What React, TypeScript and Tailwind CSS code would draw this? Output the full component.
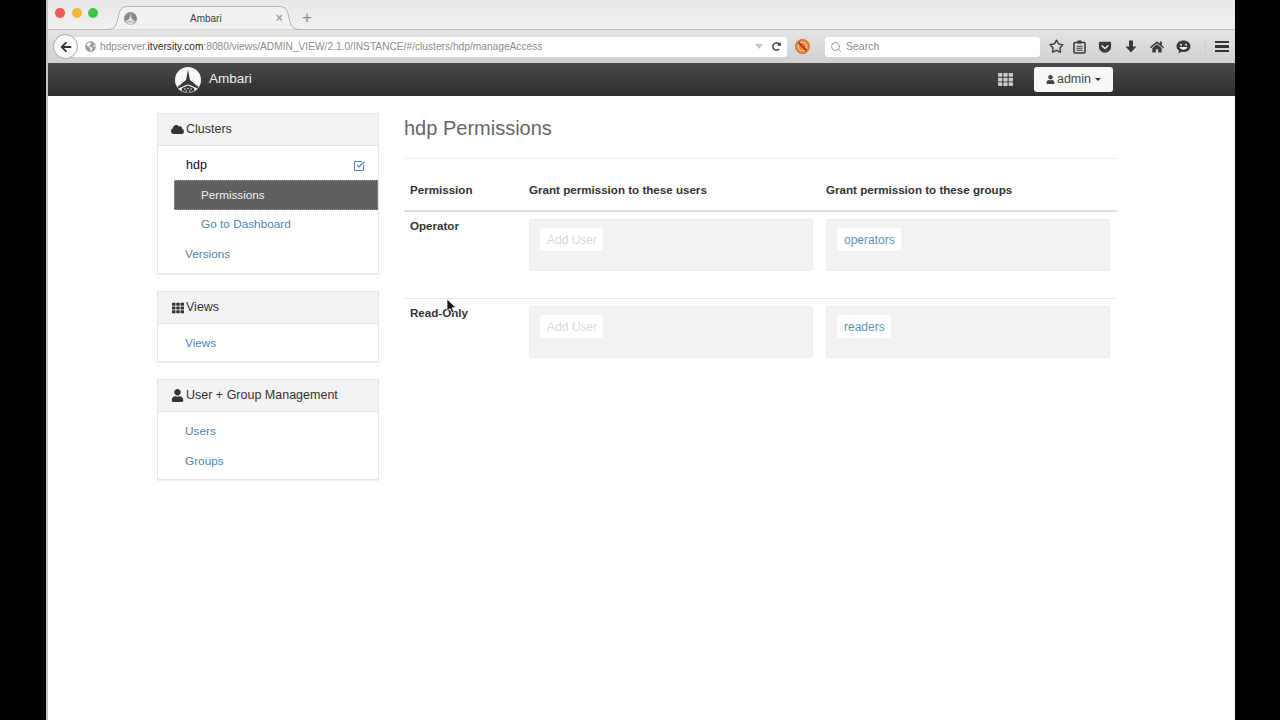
import React from "react";
import { FaCloud, FaTh, FaUser, FaArrowLeft, FaHome, FaGetPocket, FaGlobeAmericas, FaRedoAlt } from "react-icons/fa";
import { Star, SquareCheckBig, Search } from "lucide-react";

const FONT = "font-['Liberation_Sans',Arial,sans-serif]";

function Logo({ size, body, fg }: { size: number; body: string; fg: string }) {
  return (
    <svg width={size} height={size} viewBox="0 0 26 26" className="shrink-0">
      <circle cx="13" cy="13" r="13" fill={body} />
      <path d="M13 2.500 L14.200 9 L15 13 L23.500 20 L22.500 21.500 L16 18.500 L13 17.500 L10 18.500 L3.500 21.500 L2.500 20 L11 13 L11.800 9 Z" fill={fg} />
      <path d="M7 21 L13 18.500 L19 21 L19.500 24 L13 26 L6.500 24 Z" fill={fg} />
      <path d="M9 22 h1.600 M12.200 21.400 h1.600 M15.400 22 h1.600 M10.600 24 h1.400 M14 24 h1.400" stroke={body} strokeWidth="1" />
    </svg>
  );
}

function PanelBox({ icon, title, children }: { icon: React.ReactNode; title: string; children: React.ReactNode }) {
  return (
    <div className="w-[222px] border border-[#e6e6e6] bg-white shadow-[0_1px_1px_rgba(0,0,0,0.05)]">
      <div className="flex h-[32px] items-center gap-[2px] border-b border-[#e2e2e2] bg-[#f3f3f3] pl-[13px] text-[12.500px] text-[#333]">
        <span className="flex w-[13px] justify-center">{icon}</span>
        <span>{title}</span>
      </div>
      <div className="pb-[2px] pt-[5px]">{children}</div>
    </div>
  );
}

function NavRow({ label, indent }: { label: string; indent: string }) {
  return (
    <div className={`flex h-[30px] items-center text-[11.800px] text-[#4d86b5] ${indent}`}>
      <span>{label}</span>
    </div>
  );
}

function Chip({ label, muted }: { label: string; muted?: boolean }) {
  return (
    <span className={`flex h-[23px] items-center rounded-[2px] bg-white pl-[7px] pr-[6px] text-[12px] ${muted ? "text-[#d9d9d9]" : "text-[#5d95be]"}`}>
      {label}
    </span>
  );
}

function GrantBox({ label, muted }: { label: string; muted?: boolean }) {
  return (
    <div className="flex h-[52px] w-[284px] shrink-0 items-start rounded-[3px] border border-[#ececec] bg-[#f2f2f2] pl-[10px] pt-[8px]">
      <Chip label={label} muted={muted} />
    </div>
  );
}

function PermRow({ name, user, group, divider }: { name: string; user: string; group: string; divider?: boolean }) {
  return (
    <div className={`flex pl-[6px] pt-[7px] ${divider ? "h-[87px] border-b border-[#e8e8e8]" : ""}`}>
      <div className="w-[119px] shrink-0 text-[11.600px] font-bold leading-[14px] text-[#333]">{name}</div>
      <GrantBox label={user} muted />
      <div className="w-[13px] shrink-0" />
      <GrantBox label={group} />
    </div>
  );
}

function ReadingList() {
  return (
    <svg width="13" height="14" viewBox="0 0 13 14">
      <rect x="1" y="2.500" width="11" height="10.500" rx="1" fill="none" stroke="#3a3a3a" strokeWidth="1.600" />
      <rect x="4.500" y="0.500" width="4" height="3" fill="#3a3a3a" />
      <path d="M3.500 6.200h6M3.500 8.200h6M3.500 10.200h6" stroke="#3a3a3a" strokeWidth="1.100" />
    </svg>
  );
}

function Chat() {
  return (
    <svg width="15" height="14" viewBox="0 0 15 14">
      <path d="M7.500 0.500C11.500 0.500 14.500 2.900 14.500 6.200S11.500 12 7.500 12C6.800 12 6.100 11.900 5.500 11.800L2.500 13.500L3 10.600C1.400 9.600 .5 8 .5 6.200C.5 2.900 3.500 .5 7.500 .5Z" fill="#3a3a3a" />
      <circle cx="5" cy="4.800" r="1" fill="#eee" />
      <circle cx="10" cy="4.800" r="1" fill="#eee" />
      <path d="M3.500 7h8c-.5 1.800-2.100 2.800-4 2.800S4 8.800 3.500 7Z" fill="#eee" />
    </svg>
  );
}

function DownArrow() {
  return (
    <svg width="12" height="13" viewBox="0 0 12 13">
      <path d="M4 0.500H8V6.500H11.500L6 12.500L.5 6.500H4Z" fill="#3a3a3a" />
    </svg>
  );
}

function NoScript() {
  return (
    <svg width="15" height="15" viewBox="0 0 15 15">
      <circle cx="7.500" cy="7.500" r="7" fill="#e8873a" stroke="#b9602a" strokeWidth="0.800" />
      <circle cx="7.500" cy="7.500" r="4.300" fill="none" stroke="#f9d9a8" strokeWidth="1" />
      <path d="M3.500 3.500L11.500 11.500" stroke="#a83a1e" strokeWidth="1.800" />
    </svg>
  );
}

export default function App() {
  return (
    <div className={`relative flex h-[720px] w-[1280px] overflow-hidden bg-black ${FONT}`}>
      <div className="w-[46px] shrink-0 bg-black" />
      <div className="flex w-[1189px] shrink-0 flex-col border-l-2 border-[#c4c4c4] bg-white">
        {/* tab strip */}
        <div className="flex h-[30px] items-start border-b border-[#b9b9b9] bg-gradient-to-b from-[#e7e7e7] to-[#f0f0f0]">
          <div className="ml-[7px] mt-[8px] flex gap-[6.500px]">
            <span className="h-[10px] w-[10px] rounded-full bg-[#ee5a58]" />
            <span className="h-[10px] w-[10px] rounded-full bg-[#f4b63a]" />
            <span className="h-[10px] w-[10px] rounded-full bg-[#3fc24c]" />
          </div>
          <div className="relative ml-[9px] mt-[6px] flex h-[24px] w-[194px] shrink-0 items-center">
            <svg width="194" height="24" viewBox="0 0 194 24" className="absolute left-0 top-0">
              <path d="M0 23.500C6 23.500 9 22 11 12C12.500 3 15 .5 21 .5H172C178 .5 180.500 3 182 12C184 22 187 23.500 193 23.500" fill="#f1f1f1" stroke="#b0b0b0" />
            </svg>
            <span className="relative ml-[17px]">
              <Logo size={13} body="#8a8a8a" fg="#e8e8e8" />
            </span>
            <span className="relative ml-[53px] text-[10px] text-[#3f3f3f]">Ambari</span>
            <span className="relative ml-[54px] text-[12px] font-bold leading-none text-[#a0a0a0]">×</span>
          </div>
          <span className="ml-[1px] mt-[9px] text-[17px] font-light leading-none text-[#8a8a8a]">+</span>
        </div>
        {/* url bar */}
        <div className="flex h-[33px] items-center bg-gradient-to-b from-[#e4e4e4] to-[#d0d0d0]">
          <div className="flex h-[25px] w-[739px] shrink-0 items-center">
            <div className="z-10 ml-[5px] flex h-[25px] w-[25px] shrink-0 items-center justify-center rounded-full border border-[#a8a8a8] bg-[#fafafa]">
              <FaArrowLeft className="text-[12px] text-[#333]" />
            </div>
            <div className="-ml-[6px] flex h-[20px] flex-1 items-center rounded-r-[3px] bg-white pl-[13px] pr-[6px] text-[10.200px] text-[#8c8c8c]">
              <FaGlobeAmericas className="mr-[4px] text-[11px] text-[#9a9a9a]" />
              <span>
                hdpserver.<span className="text-[#2a2a2a]">itversity.com</span>:8080/views/ADMIN_VIEW/2.1.0/INSTANCE/#/clusters/hdp/manageAccess
              </span>
              <span className="ml-auto mr-[9px] h-0 w-0 border-x-[4px] border-t-[5px] border-x-transparent border-t-[#c4c4c4]" />
              <FaRedoAlt className="text-[9px] text-[#333]" />
            </div>
          </div>
          <span className="ml-[8px] flex shrink-0"><NoScript /></span>
          <div className="ml-[15px] flex h-[20px] w-[215px] shrink-0 items-center rounded-[3px] bg-white pl-[5px] text-[10.500px] text-[#8a8a8a]">
            <Search size={12} strokeWidth={1.800} className="mr-[4px] text-[#8f8f8f]" />
            Search
          </div>
          <div className="ml-[5px] flex shrink-0 items-center text-[#3a3a3a]">
            <span className="flex w-[22px] justify-center"><Star size={15} strokeWidth={2.200} className="text-[#3a3a3a]" /></span>
            <span className="flex w-[25px] justify-center"><ReadingList /></span>
            <span className="flex w-[26px] justify-center"><FaGetPocket className="text-[14px]" /></span>
            <span className="flex w-[26px] justify-center"><DownArrow /></span>
            <span className="flex w-[26px] justify-center"><FaHome className="text-[14px]" /></span>
            <span className="flex w-[26px] justify-center"><Chat /></span>
          </div>
          <div className="ml-[9px] flex h-[20px] shrink-0 items-center border-l border-[#cfcfcf] pl-[9px]">
            <div className="flex flex-col gap-[2px]">
              <span className="h-[2.500px] w-[14px] bg-[#333]" />
              <span className="h-[2.500px] w-[14px] bg-[#333]" />
              <span className="h-[2.500px] w-[14px] bg-[#333]" />
            </div>
          </div>
        </div>
        {/* ambari navbar */}
        <div className="flex h-[33px] items-center bg-gradient-to-b from-[#4a4a4a] to-[#2f2f2f] pl-[127px]">
          <Logo size={26} body="#f7f7f7" fg="#3b3b3b" />
          <span className="ml-[8px] text-[13.500px] text-[#f0f0f0]">Ambari</span>
          <FaTh className="ml-auto text-[15px] text-[#c9c9c9]" />
          <div className="ml-[21px] mr-[122px] flex h-[25px] w-[79px] items-center justify-center gap-[2px] rounded-[3px] bg-[#f8f8f8] text-[12.500px] text-[#444]">
            <FaUser className="text-[9px]" />
            <span>admin</span>
            <span className="ml-[2px] h-0 w-0 border-x-[3px] border-t-[3px] border-x-transparent border-t-[#333]" />
          </div>
        </div>
        {/* page */}
        <div className="flex flex-1 pl-[109px] pt-[17px]">
          <div className="flex w-[222px] shrink-0 flex-col gap-[17px]">
            <PanelBox icon={<FaCloud className="text-[13px] text-[#333]" />} title="Clusters">
              <div className="flex h-[29px] items-center justify-between pl-[28px] pr-[13px] text-[12.500px] text-[#111]">
                <span>hdp</span>
                <SquareCheckBig size={12} strokeWidth={2.200} className="text-[#4d86b5]" />
              </div>
              <div className="ml-[16px] flex h-[30px] items-center border border-dotted border-[#999] bg-[#5f5f5f] pl-[26px] text-[11.700px] text-[#f2f2f2]">
                Permissions
              </div>
              <NavRow label="Go to Dashboard" indent="pl-[43px]" />
              <NavRow label="Versions" indent="mb-[1px] pl-[27px]" />
            </PanelBox>
            <PanelBox icon={<FaTh className="text-[12px] text-[#333]" />} title="Views">
              <NavRow label="Views" indent="pl-[27px]" />
            </PanelBox>
            <PanelBox icon={<FaUser className="text-[13px] text-[#333]" />} title="User + Group Management">
              <NavRow label="Users" indent="pl-[27px]" />
              <NavRow label="Groups" indent="pl-[27px]" />
            </PanelBox>
          </div>
          <div className="ml-[25px] w-[713px] shrink-0">
            <h1 className="h-[46px] border-b border-[#eeeeee] pt-[3px] text-[20px] font-normal leading-[24px] text-[#666]">hdp Permissions</h1>
            <div className="flex h-[53px] items-end border-b-2 border-[#e0e0e0] pb-[12px] pl-[6px] text-[11.600px] font-bold text-[#333]">
              <span className="w-[119px]">Permission</span>
              <span className="w-[297px]">Grant permission to these users</span>
              <span>Grant permission to these groups</span>
            </div>
            <PermRow name="Operator" user="Add User" group="operators" divider />
            <PermRow name="Read-Only" user="Add User" group="readers" />
          </div>
        </div>
      </div>
      <div className="flex-1 bg-black" />
      <svg width="12" height="17" viewBox="0 0 12 17" className="absolute left-[446px] top-[298px]">
        <path d="M1 1V13L4 10.500L6 15L8 14L6 9.800H10Z" fill="#111" stroke="#fff" strokeWidth="0.800" />
      </svg>
    </div>
  );
}
